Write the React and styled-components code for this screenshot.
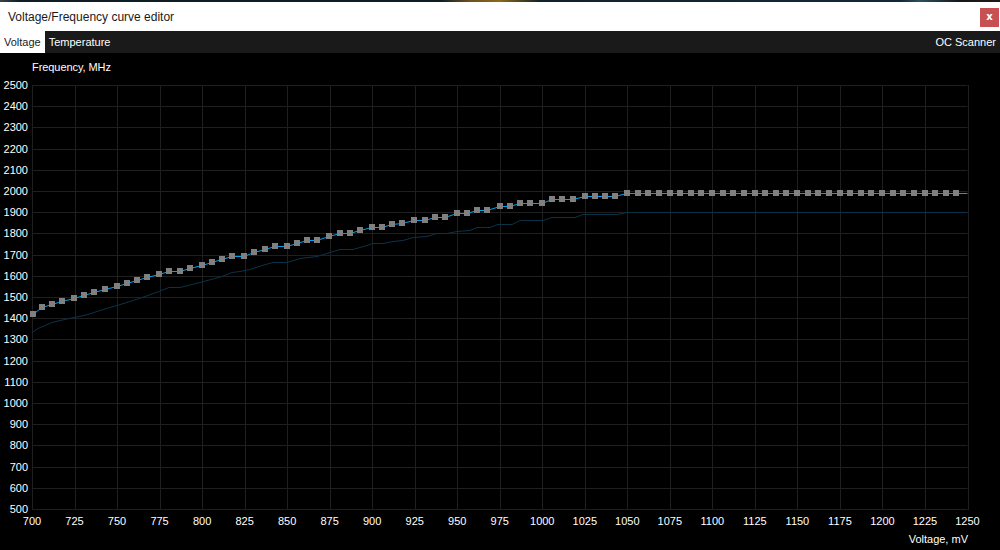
import React from 'react';
import styled, { createGlobalStyle } from 'styled-components';

const GlobalStyle = createGlobalStyle`
  html, body {
    margin: 0;
    padding: 0;
    background: #000;
  }
  body {
    font-family: Tahoma, "Liberation Sans", Arial, sans-serif;
    font-size: 11px;
  }
`;

// Custom CSS Component Start //
const Window = styled.div`
  width: 1000px;
  height: 550px;
  overflow: hidden;
  display: flex;
  flex-direction: column;
  background: #000;
`;

// sliver of the desktop wallpaper above the window
const DesktopStrip = styled.div`
  height: 2px;
  background: linear-gradient(
    to right,
    #3a4248 0,
    #0e1c26 2%,
    #0e1c26 44%,
    #6b5220 47%,
    #8a6a18 50%,
    #12222c 54%,
    #12283a 90%,
    #2a5060 92%,
    #161616 96%,
    #1c1c1c 100%
  );
`;

const TitleBar = styled.div`
  height: 29px;
  padding: 0 1px 0 8px;
  display: flex;
  align-items: center;
  justify-content: space-between;
  background: #fff;
  color: #1a1a1a;
  font-size: 12px;
`;

const CloseButton = styled.button`
  width: 19px;
  height: 19px;
  margin: 2px 0 0;
  padding: 0 0 2px;
  border: 0;
  background: #c75050;
  color: #fff;
  font-family: "DejaVu Sans", sans-serif;
  font-size: 10px;
  font-weight: bold;
`;

const TabBar = styled.div`
  height: 22px;
  display: flex;
  align-items: center;
  background: #1a1a1a;
`;

const Tab = styled.div`
  height: 100%;
  padding: 0 4px;
  display: flex;
  align-items: center;
  background: ${(p) => (p.$active ? '#fff' : 'transparent')};
  color: ${(p) => (p.$active ? '#1a1a1a' : '#fff')};
`;

const ScannerTab = styled(Tab)`
  margin-left: auto;
`;

const ChartPanel = styled.div`
  flex: 1;
  min-height: 0;
`;

const Chart = styled.svg`
  display: block;
  font-family: Tahoma, "Liberation Sans", Arial, sans-serif;
  font-size: 11px;
  fill: #fff;
`;
// Custom CSS Component End //

const PANEL_TOP = 53;
const LEFT = 32;
const RIGHT = 967.5;
const TOP = 85 - PANEL_TOP;
const BOTTOM = 509 - PANEL_TOP;

const freqTicks = Array.from({ length: 21 }, (_, i) => 500 + i * 100);
const voltTicks = Array.from({ length: 23 }, (_, i) => 700 + i * 25);

const xOf = (mv) => LEFT + ((mv - 700) / 550) * (RIGHT - LEFT);
const yOf = (mhz) => BOTTOM - ((mhz - 500) / 2000) * (BOTTOM - TOP);

// marker positions read off the curve, page coordinates
const curve = [
  [33, 314], [42, 307], [52, 304], [62, 301], [74, 298], [84, 295], [94, 292], [105, 289],
  [117, 286], [127, 283], [137, 280], [147, 277], [159, 274], [169, 271], [180, 271], [190, 268],
  [202, 265], [212, 262], [222, 259], [232, 256], [244, 256], [254, 252], [265, 249], [275, 246],
  [287, 246], [297, 243], [307, 240], [317, 240], [329, 236], [340, 233], [350, 233], [360, 230],
  [372, 227], [382, 227], [392, 224], [402, 223], [414, 220], [425, 220], [435, 217], [445, 217],
  [457, 213], [467, 213], [477, 210], [487, 210], [500, 206], [510, 206], [520, 203], [530, 203],
  [542, 203], [552, 199], [562, 199], [573, 199], [585, 196], [595, 196], [605, 196], [615, 196],
];
for (let i = 0; i < 32; i++) {
  curve.push([Math.round(627 + i * 10.625), 193]);
}

// the default curve under the edited one
const baseCurve = [
  [32, 332], [38, 328], [45, 325], [52, 322], [60, 320], [74, 317], [88, 314], [100, 310],
  [117, 305], [130, 301], [145, 296], [159, 291], [169, 287], [180, 287], [200, 282], [222, 276],
  [232, 272], [240, 271], [250, 269], [262, 265], [273, 262], [287, 262], [300, 258], [317, 256],
  [330, 252], [340, 249], [353, 249], [367, 245], [373, 243], [383, 243], [393, 241], [403, 240],
  [413, 237], [427, 236], [437, 233], [447, 233], [457, 231], [470, 230], [477, 227], [490, 227],
  [498, 224], [512, 224], [520, 220], [543, 220], [552, 217], [575, 217], [583, 214], [617, 214],
  [627, 212], [967.5, 212],
];

const toPoints = (pts) => pts.map(([x, y]) => `${x},${y - PANEL_TOP + 0.5}`).join(' ');

function App() {
  return (
    <Window>
      <GlobalStyle />
      <DesktopStrip />
      <TitleBar>
        <span>Voltage/Frequency curve editor</span>
        <CloseButton>x</CloseButton>
      </TitleBar>
      <TabBar>
        <Tab $active>Voltage</Tab>
        <Tab>Temperature</Tab>
        <ScannerTab>OC Scanner</ScannerTab>
      </TabBar>
      <ChartPanel>
        <Chart width='1000' height='497' viewBox='0 0 1000 497'>
          <text x={32} y={18} textLength={79}>Frequency, MHz</text>
          {freqTicks.map((f) => (
            <g key={f}>
              <line x1={LEFT} x2={RIGHT} y1={Math.round(yOf(f)) + 0.5} y2={Math.round(yOf(f)) + 0.5} stroke='#1f1f1f' />
              <text x={28} y={Math.round(yOf(f)) + 4} textAnchor='end'>{f}</text>
            </g>
          ))}
          {voltTicks.map((v) => (
            <g key={v}>
              <line x1={Math.round(xOf(v)) + 0.5} x2={Math.round(xOf(v)) + 0.5} y1={TOP} y2={BOTTOM + 1} stroke='#1f1f1f' />
              <text x={xOf(v)} y={BOTTOM + 16} textAnchor='middle'>{v}</text>
            </g>
          ))}
          <polyline points={toPoints(baseCurve)} fill='none' stroke='#0b3347' strokeWidth='1' />
          <polyline points={toPoints([...curve, [967.5, 193]])} fill='none' stroke='#00a2f2' strokeWidth='1' />
          {curve.map(([x, y]) => (
            <rect key={x} x={x - 3} y={y - PANEL_TOP - 3} width='6' height='6' fill='#808080' />
          ))}
          <text x={968} y={490} textAnchor='end'>Voltage, mV</text>
        </Chart>
      </ChartPanel>
    </Window>
  );
}

export default App;
